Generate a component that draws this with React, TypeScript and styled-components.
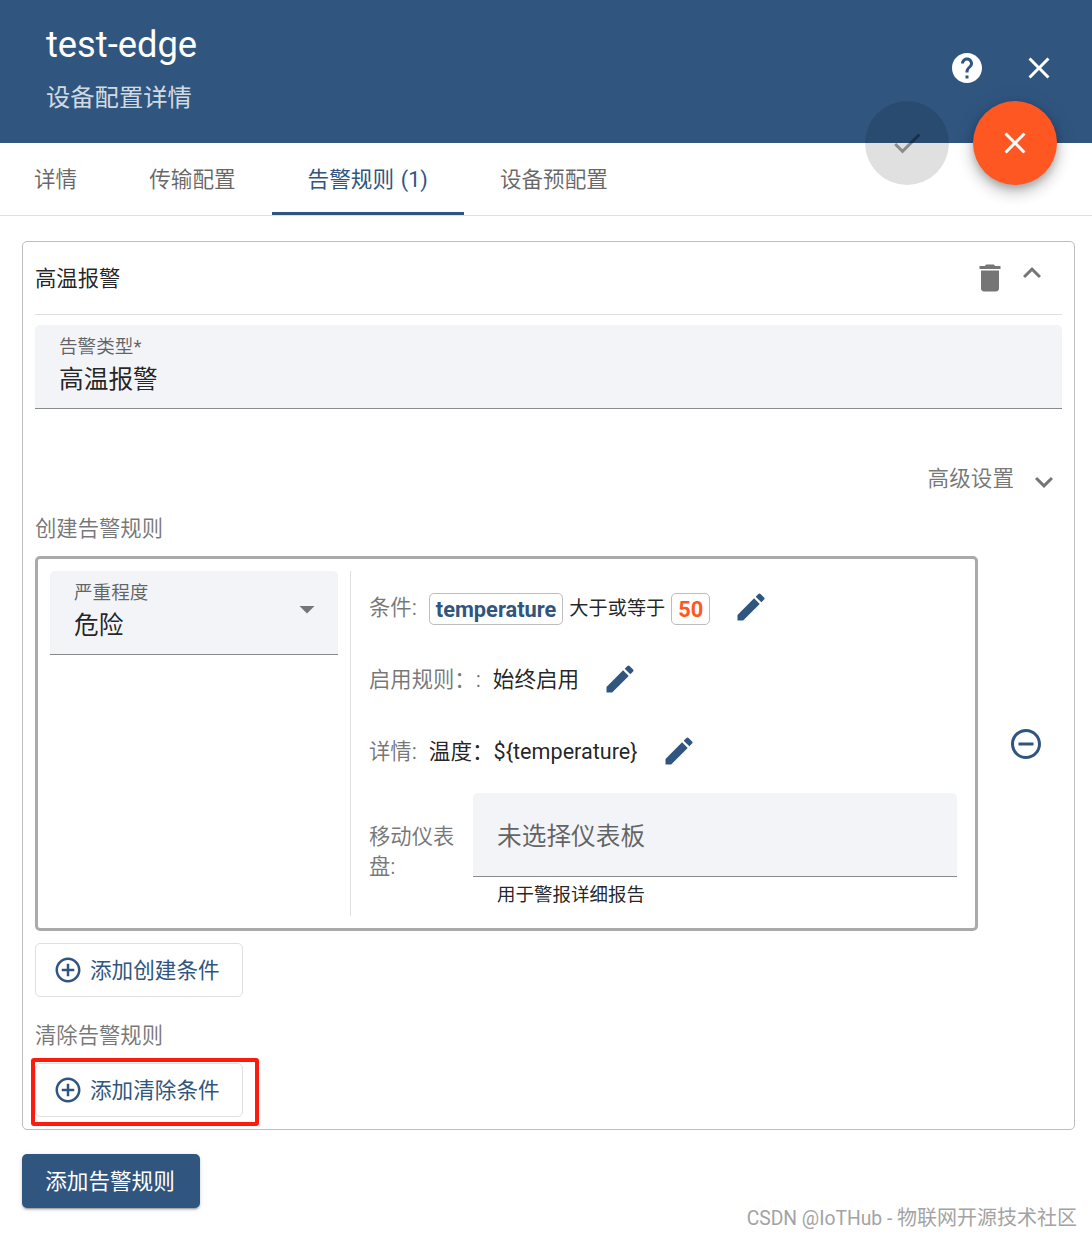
import React from 'react';
import styled, {createGlobalStyle} from 'styled-components';
import {
    MdAddCircleOutline,
    MdArrowDropDown,
    MdCheck,
    MdClose,
    MdDelete,
    MdEdit,
    MdExpandLess,
    MdExpandMore,
    MdHelp,
    MdRemoveCircleOutline
} from 'react-icons/md';

const primary = '#305680';
const FONT = `Roboto, "Noto Sans CJK SC", sans-serif`;

const GlobalStyle = createGlobalStyle`
  html, body {
    margin: 0;
    padding: 0;
    background: #fff;
  }
  body {
    font-family: ${FONT};
    font-size: 21.6px;
    color: rgba(0, 0, 0, .87);
  }
  * {
    box-sizing: border-box;
  }
`

const Page = styled.div`
  position: relative;
  width: 1092px;
  height: 1236px;
  overflow: hidden;
`

const Header = styled.header`
  height: 143px;
  background: ${primary};
  color: #fff;
  padding: 24px 17px 0 46px;
  display: flex;
  justify-content: space-between;
  align-items: flex-start;
`

const Title = styled.div`
  font-size: 36.3px;
  line-height: 42px;
`

const Subtitle = styled.div`
  margin-top: 16px;
  font-size: 24.3px;
  line-height: 32px;
  color: rgba(255, 255, 255, .8);
`

const HeaderActions = styled.div`
  display: flex;
  margin-top: 8px;
`

const HeaderButton = styled.div`
  width: 72px;
  height: 72px;
  display: flex;
  align-items: center;
  justify-content: center;
  font-size: 36px;
`

const FabGroup = styled.div`
  position: absolute;
  top: 101px;
  right: 35px;
  display: flex;
  gap: 24px;
`

const Fab = styled.div<{ $disabled?: boolean }>`
  width: 84px;
  height: 84px;
  border-radius: 50%;
  display: flex;
  align-items: center;
  justify-content: center;
  font-size: 36px;
  background: ${p => p.$disabled ? 'rgba(0, 0, 0, .12)' : '#ff5722'};
  color: ${p => p.$disabled ? 'rgba(0, 0, 0, .38)' : '#fff'};
  box-shadow: ${p => p.$disabled ? 'none' : '0 4px 7px -1px rgba(0,0,0,.2), 0 8px 14px 1px rgba(0,0,0,.14), 0 2px 20px 1px rgba(0,0,0,.12)'};
`

const Tabs = styled.nav`
  height: 73px;
  display: flex;
  border-bottom: 1px solid #e0e0e0;
`

const Tab = styled.div<{ $active?: boolean }>`
  height: 72px;
  padding: 0 36px;
  display: flex;
  align-items: center;
  word-spacing: 1.5px;
  color: ${p => p.$active ? primary : 'rgba(0, 0, 0, .6)'};
  border-bottom: 3px solid ${p => p.$active ? primary : 'transparent'};

  &:first-child {
    padding: 0 36px 0 34px;
  }
`

const Content = styled.main`
  padding: 25px 17px 0 22px;
`

const Panel = styled.section`
  height: 889px;
  border: 1px solid #bdbdbd;
  border-radius: 5px;
  padding: 0 12px;
`

const PanelHeader = styled.div`
  height: 73px;
  padding-right: 9px;
  display: flex;
  align-items: center;
  border-bottom: 1px solid #e0e0e0;
`

const PanelTitle = styled.div`
  flex: 1;
  padding-bottom: 4px;
  font-size: 21.33px;
`

const GreyIcon = styled.span<{ $lift?: number }>`
  width: 42px;
  display: flex;
  justify-content: center;
  font-size: 36px;
  color: #757575;
  margin-bottom: ${p => p.$lift || 0}px;
`

const Field = styled.div<{ $height: number }>`
  height: ${p => p.$height}px;
  background: #f3f4f8;
  border-radius: 5px 5px 0 0;
  border-bottom: 1px solid #8a8a8a;
  padding: 11px 24px 0;
  position: relative;
`

const FieldLabel = styled.div`
  font-size: 18.6px;
  line-height: 22px;
  color: rgba(0, 0, 0, .6);
`

const FieldValue = styled.div`
  margin-top: 4px;
  font-size: 24.7px;
  line-height: 36px;
`

const TypeField = styled(Field)`
  margin-top: 10px;
`

const Advanced = styled.div`
  margin-top: 51px;
  height: 36px;
  display: flex;
  justify-content: flex-end;
  align-items: center;
  gap: 12px;
  color: rgba(0, 0, 0, .54);
`

const AdvancedText = styled.span`
  padding-bottom: 4px;
`

const AdvancedIcon = styled.span`
  margin-top: 8px;
  display: flex;
  font-size: 36px;
  color: #757575;
`

const SectionLabel = styled.div`
  font-size: 21.33px;
  line-height: 32px;
  color: rgba(0, 0, 0, .54);
`

const RuleLabel = styled(SectionLabel)`
  margin-top: 17px;
`

const RuleRow = styled.div`
  margin-top: 11px;
  display: flex;
  align-items: center;
`

const RuleBox = styled.div`
  width: 943px;
  height: 375px;
  border: 3px solid #aaa;
  border-radius: 5px;
  padding: 12px 18px 12px 12px;
  display: flex;
`

const LeftCol = styled.div`
  width: 301px;
  padding-right: 12px;
  border-right: 1px solid #e0e0e0;
`

const DropArrow = styled.span`
  position: absolute;
  right: 13px;
  top: 20px;
  font-size: 36px;
  color: #757575;
  display: flex;
`

const RightCol = styled.div`
  flex: 1;
  padding-left: 18px;
`

const SpecRow = styled.div`
  height: 72px;
  padding-bottom: 4px;
  display: flex;
  align-items: center;
  white-space: nowrap;
`

const SpecLabel = styled.span`
  font-size: 21.33px;
  color: rgba(0, 0, 0, .54);
  margin-right: 12px;
`

const Chip = styled.span<{ $accent?: boolean }>`
  height: 32px;
  margin-top: 8px;
  padding: 0 6px;
  border: 1px solid #bdbdbd;
  border-radius: 5px;
  display: inline-flex;
  align-items: center;
  font-weight: 700;
  font-size: 21.8px;
  color: ${p => p.$accent ? '#ff5722' : primary};
`

const Operator = styled.span`
  margin: 4px 6px 0;
  font-size: 19.2px;
`

const EditIcon = styled.span`
  margin: 4px 0 0 23px;
  display: flex;
  font-size: 36px;
  color: ${primary};
`

const DashboardRow = styled.div`
  display: flex;
  margin-top: 6px;
`

const DashboardLabel = styled.div`
  width: 104px;
  padding-top: 29px;
  font-size: 21.33px;
  line-height: 30px;
  color: rgba(0, 0, 0, .54);
`

const DashboardCol = styled.div`
  flex: 1;
`

const DashboardField = styled(Field)`
  padding-top: 0;
  padding-bottom: 2px;
  display: flex;
  align-items: center;
  font-size: 24.7px;
  color: rgba(0, 0, 0, .6);
`

const Hint = styled.div`
  padding: 7px 24px 0;
  font-size: 18.5px;
  line-height: 22px;
`

const RemoveButton = styled.div`
  flex: 1;
  padding-left: 12px;
  display: flex;
  justify-content: center;
  font-size: 36px;
  color: ${primary};
`

const OutlineButton = styled.div<{ $top: number }>`
  width: 208px;
  height: 54px;
  margin-top: ${p => p.$top}px;
  border: 1px solid #e0e0e0;
  border-radius: 5px;
  padding-left: 17px;
  display: flex;
  align-items: center;
  gap: 7px;
  color: ${primary};

  svg {
    font-size: 30px;
  }
`

const ButtonText = styled.span`
  padding-bottom: 4px;
`

const ClearLabel = styled(SectionLabel)`
  margin-top: 23px;
`

const RedFrame = styled.div`
  position: absolute;
  left: 31px;
  top: 1058px;
  width: 228px;
  height: 68px;
  border: 4px solid #ff1a0e;
  border-radius: 3px;
`

const PrimaryButton = styled.div`
  margin-top: 24px;
  width: 178px;
  height: 54px;
  padding-right: 2px;
  border-radius: 5px;
  background: ${primary};
  color: #fff;
  display: flex;
  align-items: center;
  justify-content: center;
  box-shadow: 0 3px 1px -2px rgba(0,0,0,.2), 0 2px 2px 0 rgba(0,0,0,.14), 0 1px 5px 0 rgba(0,0,0,.12);
`

const Watermark = styled.div`
  position: absolute;
  right: 15px;
  top: 1205px;
  font-size: 19.3px;
  line-height: 26px;
  color: #a3a3a3;

  span {
    font-size: 20px;
  }
`

const App = () => {
    return (<Page>
        <GlobalStyle/>
        <Header>
            <div>
                <Title>test-edge</Title>
                <Subtitle>设备配置详情</Subtitle>
            </div>
            <HeaderActions>
                <HeaderButton><MdHelp/></HeaderButton>
                <HeaderButton><MdClose/></HeaderButton>
            </HeaderActions>
        </Header>
        <FabGroup>
            <Fab $disabled><MdCheck/></Fab>
            <Fab><MdClose/></Fab>
        </FabGroup>
        <Tabs>
            <Tab>详情</Tab>
            <Tab>传输配置</Tab>
            <Tab $active>告警规则 (1)</Tab>
            <Tab>设备预配置</Tab>
        </Tabs>
        <Content>
            <Panel>
                <PanelHeader>
                    <PanelTitle>高温报警</PanelTitle>
                    <GreyIcon><MdDelete/></GreyIcon>
                    <GreyIcon $lift={10}><MdExpandLess/></GreyIcon>
                </PanelHeader>
                <TypeField $height={84}>
                    <FieldLabel>告警类型*</FieldLabel>
                    <FieldValue>高温报警</FieldValue>
                </TypeField>
                <Advanced>
                    <AdvancedText>高级设置</AdvancedText>
                    <AdvancedIcon><MdExpandMore/></AdvancedIcon>
                </Advanced>
                <RuleLabel>创建告警规则</RuleLabel>
                <RuleRow>
                    <RuleBox>
                        <LeftCol>
                            <Field $height={84}>
                                <FieldLabel>严重程度</FieldLabel>
                                <FieldValue>危险</FieldValue>
                                <DropArrow><MdArrowDropDown/></DropArrow>
                            </Field>
                        </LeftCol>
                        <RightCol>
                            <SpecRow>
                                <SpecLabel>条件:</SpecLabel>
                                <Chip>temperature</Chip>
                                <Operator>大于或等于</Operator>
                                <Chip $accent>50</Chip>
                                <EditIcon><MdEdit/></EditIcon>
                            </SpecRow>
                            <SpecRow>
                                <SpecLabel>启用规则：:</SpecLabel>
                                始终启用
                                <EditIcon><MdEdit/></EditIcon>
                            </SpecRow>
                            <SpecRow>
                                <SpecLabel>详情:</SpecLabel>
                                温度：${'{temperature}'}
                                <EditIcon><MdEdit/></EditIcon>
                            </SpecRow>
                            <DashboardRow>
                                <DashboardLabel>移动仪表盘:</DashboardLabel>
                                <DashboardCol>
                                    <DashboardField $height={84}>未选择仪表板</DashboardField>
                                    <Hint>用于警报详细报告</Hint>
                                </DashboardCol>
                            </DashboardRow>
                        </RightCol>
                    </RuleBox>
                    <RemoveButton><MdRemoveCircleOutline/></RemoveButton>
                </RuleRow>
                <OutlineButton $top={12}><MdAddCircleOutline/><ButtonText>添加创建条件</ButtonText></OutlineButton>
                <ClearLabel>清除告警规则</ClearLabel>
                <OutlineButton $top={11}><MdAddCircleOutline/><ButtonText>添加清除条件</ButtonText></OutlineButton>
            </Panel>
            <PrimaryButton><ButtonText>添加告警规则</ButtonText></PrimaryButton>
        </Content>
        <RedFrame/>
        <Watermark>CSDN @IoTHub - <span>物联网开源技术社区</span></Watermark>
    </Page>);
};

export default App;
